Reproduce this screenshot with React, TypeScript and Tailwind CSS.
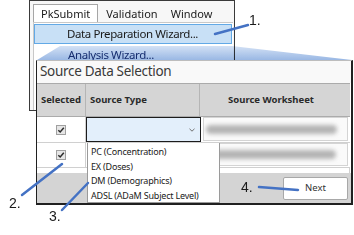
import React from "react";

const ui = { fontFamily: '"Noto Sans", "Liberation Sans", sans-serif' };
const ann = { fontFamily: '"Liberation Sans", Arial, sans-serif' };

function Check() {
  return (
    <div className="w-[10px] h-[10px] border border-[#a0a0a0] bg-[#e6e6e6] flex items-center justify-center">
      <svg width="8" height="8" viewBox="0 0 8 8">
        <path d="M1.3 4.2 L3.2 6 L6.8 1.8" fill="none" stroke="#2b2b2b" strokeWidth="1.5" />
      </svg>
    </div>
  );
}

function Blur({ w }: { w: number }) {
  return (
    <div className="h-[9px] rounded-full bg-[#b4b4b4] blur-[2px]" style={{ width: w }} />
  );
}

export default function App() {
  return (
    <div className="relative w-[354px] h-[235px] bg-white overflow-hidden text-[#1a1a1a]" style={ui}>
      {/* Menu window */}
      <div className="absolute left-[29px] top-0 w-[206px] h-[111px] border border-[#3a3a3a] bg-[#f7f7f7] flex flex-col">
        <div className="flex items-end h-[21px] pl-[3px] text-[11px] leading-none">
          <div className="h-[18px] px-[7px] flex items-center border border-b-0 border-[#a6a6a6] bg-white">PkSubmit</div>
          <div className="h-[18px] pl-[8px] flex items-center">Validation</div>
          <div className="h-[18px] pl-[13px] flex items-center">Window</div>
        </div>
        <div className="flex-1 ml-[3px] mr-[1px] bg-white border-l border-t border-[#c8c8c8] pt-[1px] text-[11.5px] leading-none tracking-[-0.4px]">
          <div className="h-[20px] mr-[1px] bg-[#c8e0f6] border border-[#62a9e6] flex items-center pl-[32px]">
            Data Preparation Wizard...
          </div>
          <div className="h-[16px] overflow-hidden pl-[34px] pt-[5px] text-[#1f3a7a]">Analysis Wizard...</div>
        </div>
      </div>

      {/* callout */}
      <svg className="absolute left-0 top-0 mix-blend-multiply" width="354" height="235">
        <defs>
          <linearGradient id="cg" x1="0" y1="0" x2="0" y2="1">
            <stop offset="0" stopColor="#d3e1f5" />
            <stop offset="1" stopColor="#9ab8e4" />
          </linearGradient>
        </defs>
        <polygon points="60,46 232,46 352,60 37,60" fill="url(#cg)" />
      </svg>

      {/* Dialog */}
      <div className="absolute left-[36px] top-[60px] w-[317px] h-[145px] bg-white border-l border-r-2 border-b-2 border-t border-l-[#202020] border-r-[#202020] border-b-[#202020] border-t-[#bdbdbd] flex flex-col">
        <div className="h-[22px] shrink-0 flex items-center pl-[3px] text-[13.5px] tracking-[-0.3px] leading-none text-[#3a3a3a] bg-[#f9f9f9]">
          Source Data Selection
        </div>
        <div className="flex flex-col mr-[1px]">
          <div className="flex h-[34px] bg-[#d5d5d5] border-t border-b border-[#ababab] text-[9.5px] font-bold leading-none text-[#2a2a2a]">
            <div className="w-[49px] flex items-center justify-center border-r border-[#b5b5b5]">Selected</div>
            <div className="w-[114px] flex items-center pl-[4px] border-r border-[#b5b5b5]">Source Type</div>
            <div className="flex-1 flex items-center justify-center pr-[8px]">Source Worksheet</div>
          </div>
          <div className="flex h-[26px] border-b border-[#d0d0d0]">
            <div className="w-[49px] flex items-center justify-center border-r border-[#d0d0d0]"><Check /></div>
            <div className="w-[115px] border-[1.5px] border-[#1c1c1c] bg-[#e3effb] flex items-center justify-end pr-[5px]">
              <svg width="6" height="4" viewBox="0 0 6 4"><path d="M0.5 0.8 L3 3.2 L5.5 0.8" fill="none" stroke="#707070" strokeWidth="1" /></svg>
            </div>
            <div className="flex-1 pl-[2px] pr-[2px] pb-[1px]">
              <div className="h-full border border-[#d4d4d4] bg-[#fafafa] flex items-center pl-[2px]"><Blur w={131} /></div>
            </div>
          </div>
          <div className="flex h-[25px] border-b border-[#d0d0d0]">
            <div className="w-[49px] flex items-center justify-center border-r border-[#d0d0d0]"><Check /></div>
            <div className="w-[114px] border-r border-[#d0d0d0]"></div>
            <div className="flex-1 pl-[2px] pr-[2px] pb-[1px]">
              <div className="h-full border border-[#d4d4d4] bg-[#fafafa] flex items-center pl-[2px]"><Blur w={131} /></div>
            </div>
          </div>
          <div className="h-[5px] border-r border-[#d0d0d0]"></div>
        </div>
        <div className="flex-1 bg-[#d4d4d4] flex justify-end items-start pt-[4px] pr-[3px]">
          <div className="w-[65px] h-[23px] bg-white border border-[#a8a8a8] rounded-[2px] flex items-center justify-center text-[9.5px] text-[#333]">
            Next
          </div>
        </div>
      </div>

      {/* dropdown list */}
      <div className="absolute left-[87px] top-[143px] w-[133px] h-[60px] bg-white border border-t-0 border-[#9a9a9a] flex flex-col pl-[3px] pt-[2px] text-[9px] tracking-[-0.2px] leading-[14.5px] text-[#1a1a1a]">
        <div>PC (Concentration)</div>
        <div>EX (Doses)</div>
        <div>DM (Demographics)</div>
        <div>ADSL (ADaM Subject Level)</div>
      </div>

      {/* annotations */}
      <svg className="absolute left-0 top-0" width="354" height="235">
        <g stroke="#4472c4" strokeWidth="2.5" strokeLinecap="round">
          <line x1="215" y1="34" x2="248" y2="25" />
          <line x1="22" y1="195" x2="62" y2="164" />
          <line x1="62" y1="210" x2="88" y2="183" />
          <line x1="259" y1="187" x2="298" y2="190" />
        </g>
      </svg>
      <div className="absolute left-[249px] top-[13px] text-[14px] leading-none" style={ann}>1.</div>
      <div className="absolute left-[9px] top-[196px] text-[14px] leading-none" style={ann}>2.</div>
      <div className="absolute left-[49px] top-[209px] text-[14px] leading-none" style={ann}>3.</div>
      <div className="absolute left-[241px] top-[180px] text-[14px] leading-none" style={ann}>4.</div>
    </div>
  );
}
